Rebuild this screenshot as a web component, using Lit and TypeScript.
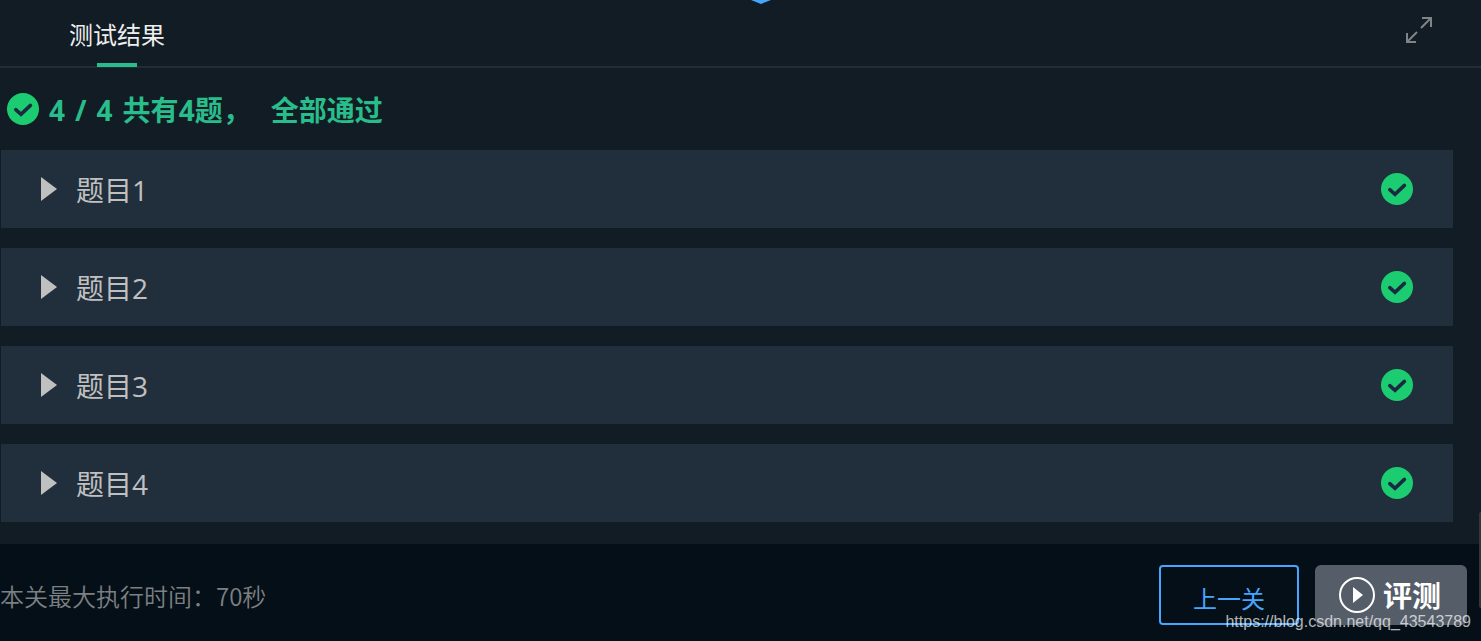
import { LitElement, html, css } from "lit";
import { customElement, property, state } from "lit/decorators.js";

@customElement("pass-icon")
export class PassIcon extends LitElement {
  static styles = css`
    :host {
      display: block;
      flex: none;
      width: 32px;
      height: 32px;
    }
    svg {
      display: block;
    }
  `;

  render() {
    return html`<svg width="32" height="32" viewBox="0 0 32 32" role="img" aria-label="通过">
      <circle cx="16" cy="16" r="16" fill="#1ccc71" />
      <path
        d="M8.800 16.700l5.200 4.600 9.400-8.900"
        fill="none"
        stroke="#1b2a40"
        stroke-width="3.600"
        stroke-linecap="round"
        stroke-linejoin="miter"
      />
    </svg>`;
  }
}

@customElement("case-item")
export class CaseItem extends LitElement {
  @property() label = "";

  static styles = css`
    :host {
      display: block;
      background: #202f3b;
    }
    .head {
      display: flex;
      align-items: center;
      gap: 19px;
      height: 78px;
      padding: 0 40px;
      list-style: none;
      cursor: pointer;
    }
    .head::-webkit-details-marker {
      display: none;
    }
    .arrow {
      display: block;
      flex: none;
    }
    details[open] .arrow {
      transform: rotate(90deg);
    }
    .label {
      flex: 1;
      padding-top: 2px;
      font-size: 28px;
      line-height: 40px;
      color: #c0c0c0;
    }
    .body {
      padding: 0 76px 24px;
      font-size: 24px;
      color: #7c8083;
    }
  `;

  render() {
    return html`<details>
      <summary class="head">
        <svg class="arrow" width="16" height="24" viewBox="0 0 16 24" aria-hidden="true">
          <path d="M0 0l16 12L0 24z" fill="#c0c0c0" />
        </svg>
        <span class="label">${this.label}</span>
        <pass-icon></pass-icon>
      </summary>
      <div class="body"></div>
    </details>`;
  }
}

@customElement("app-root")
export class AppRoot extends LitElement {
  @state() private cases = ["题目1", "题目2", "题目3", "题目4"];

  static styles = css`
    :host {
      display: flex;
      flex-direction: column;
      position: relative;
      min-height: 100vh;
      overflow: hidden;
      background: #121c24;
      font-family: "Open Sans", "Noto Sans CJK SC", sans-serif;
    }
    .handle {
      position: absolute;
      top: 0;
      left: calc(50% + 10px);
    }
    .header {
      display: flex;
      justify-content: space-between;
      height: 66px;
      padding: 0 48px 0 69px;
      border-bottom: 2px solid #232d36;
    }
    .tab {
      display: flex;
      flex-direction: column;
      align-items: center;
      justify-content: space-between;
      height: 67px;
      padding: 17px 0 0;
      border: 0;
      background: none;
      font: inherit;
      font-size: 24px;
      line-height: 36px;
      color: #eeeeee;
      box-sizing: border-box;
    }
    .tab::after {
      content: "";
      width: 40px;
      height: 4px;
      background: #29bd8b;
    }
    .expand {
      align-self: flex-start;
      margin-top: 16px;
      padding: 0;
      border: 0;
      background: none;
      color: #7f8488;
    }
    .expand svg {
      display: block;
    }
    .content {
      flex: 1;
      padding: 0 28px 22px 1px;
    }
    .result {
      display: flex;
      align-items: center;
      gap: 10px;
      height: 82px;
      margin: 0;
      padding-left: 6px;
      font-size: 28px;
      line-height: 40px;
      font-weight: 700;
      color: #29bd8b;
    }
    .result span {
      padding-top: 2px;
    }
    .result .verdict {
      padding-left: 10px;
    }
    .list {
      display: grid;
      gap: 20px;
    }
    .footer {
      display: flex;
      align-items: center;
      gap: 16px;
      padding: 21px 14px 16px 0;
      background: #050f18;
    }
    .limit {
      flex: 1;
      padding-top: 2px;
      font-family: "Noto Sans CJK SC", sans-serif;
      font-size: 24px;
      line-height: 36px;
      font-weight: 350;
      color: #7c8083;
    }
    .btn {
      display: flex;
      align-items: center;
      justify-content: center;
      height: 60px;
      font: inherit;
      line-height: 40px;
      box-sizing: border-box;
    }
    .prev {
      width: 140px;
      padding: 8px 0 0;
      border: 2px solid #46a6ff;
      border-radius: 4px;
      background: transparent;
      font-size: 24px;
      color: #46a6ff;
    }
    .run {
      gap: 8px;
      width: 152px;
      padding: 0 2px 0 0;
      border: 0;
      border-radius: 6px;
      background: #555d69;
      font-size: 29px;
      font-weight: 700;
      color: #ffffff;
    }
    .run span {
      padding-top: 2px;
    }
    .thumb {
      position: absolute;
      right: 0;
      bottom: 33px;
      width: 2px;
      height: 96px;
      border-radius: 2px 0 0 2px;
      background: #33373b;
    }
    .mark {
      position: absolute;
      right: 10px;
      bottom: 9px;
      font-family: "Liberation Sans", Arial, sans-serif;
      font-size: 16px;
      line-height: 20px;
      color: rgba(255, 255, 255, 0.7);
      pointer-events: none;
    }
  `;

  render() {
    const total = this.cases.length;
    return html`
      <svg class="handle" width="20" height="4" viewBox="0 0 20 4" aria-hidden="true">
        <path d="M0 0h20l-10 4z" fill="#46a6ff" />
      </svg>
      <header class="header">
        <button class="tab" type="button">测试结果</button>
        <button class="expand" type="button" aria-label="全屏">
          <svg width="28" height="28" viewBox="0 0 28 28" fill="none" stroke="currentColor" stroke-width="2">
            <path d="M17 2h9v9M26 2L16 12M2 17v9h9M2 26l10-10" />
          </svg>
        </button>
      </header>
      <main class="content">
        <h1 class="result">
          <pass-icon></pass-icon>
          <span>${total}</span>
          <span>/</span>
          <span>${total}</span>
          <span>共有${total}题，</span>
          <span class="verdict">全部通过</span>
        </h1>
        <div class="list">
          ${this.cases.map((name) => html`<case-item .label=${name}></case-item>`)}
        </div>
      </main>
      <footer class="footer">
        <span class="limit">本关最大执行时间：70秒</span>
        <button class="btn prev" type="button">上一关</button>
        <button class="btn run" type="button">
          <svg width="36" height="36" viewBox="0 0 36 36" aria-hidden="true">
            <circle cx="18" cy="18" r="17" fill="none" stroke="#fff" stroke-width="2" />
            <path d="M14 10l10 8-10 8z" fill="#fff" />
          </svg>
          <span>评测</span>
        </button>
      </footer>
      <span class="thumb"></span>
      <span class="mark">https://blog.csdn.net/qq_43543789</span>
    `;
  }
}
